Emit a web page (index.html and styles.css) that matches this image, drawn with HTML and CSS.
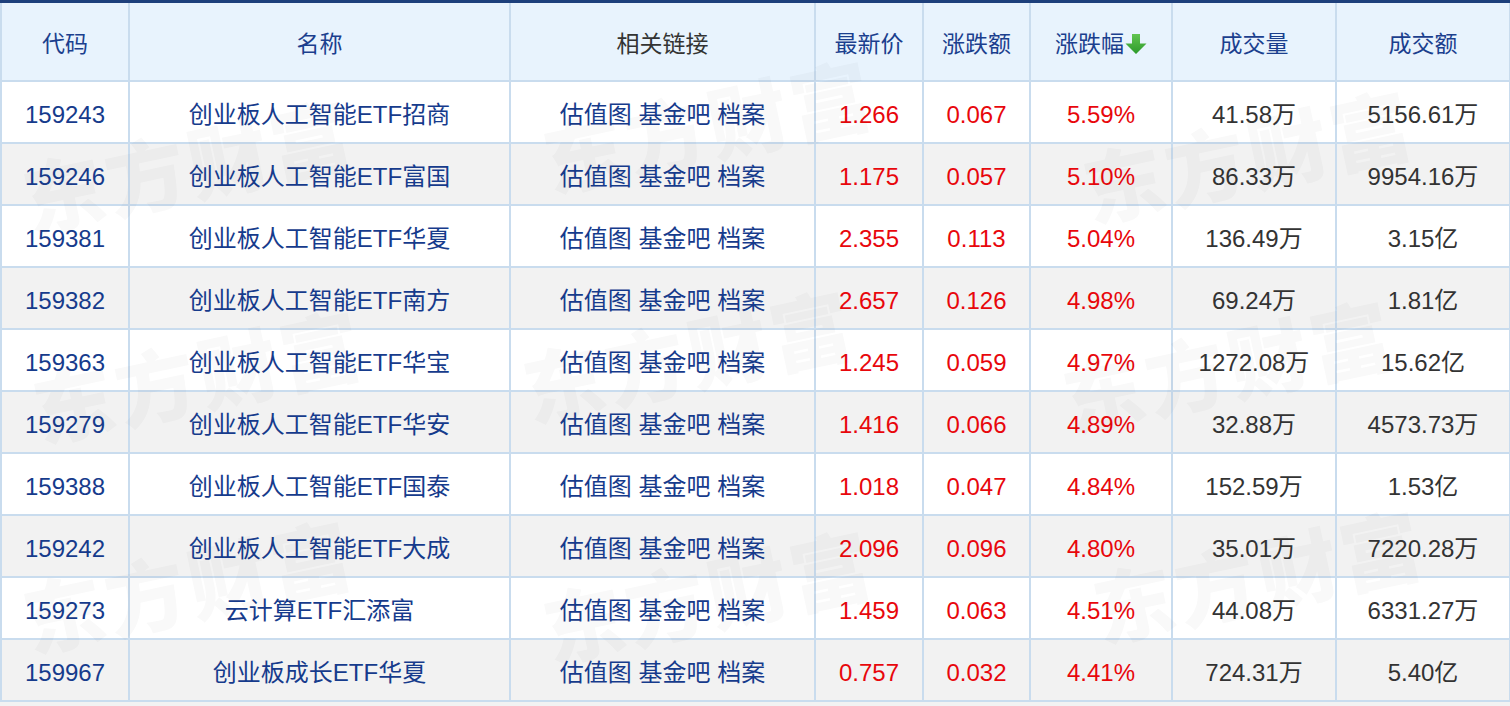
FILE: index.html
```html
<!DOCTYPE html>
<html lang="zh-CN">
<head>
<meta charset="utf-8">
<title>ETF</title>
<link rel="stylesheet" href="styles.css">
</head>
<body>
<div class="wrap">
<table class="grid">
  <colgroup>
    <col class="c1"><col class="c2"><col class="c3"><col class="c4"><col class="c5"><col class="c6"><col class="c7"><col class="c8">
  </colgroup>
  <thead>
    <tr>
      <th>代码</th><th>名称</th><th class="dark">相关链接</th><th>最新价</th><th>涨跌额</th>
      <th>涨跌幅<svg class="arrow" width="22" height="22" viewBox="0 0 22 22"><defs><linearGradient id="g" x1="0" y1="0" x2="0" y2="1"><stop offset="0" stop-color="#62c450"/><stop offset="1" stop-color="#2c9a2a"/></linearGradient></defs><path d="M7 1h8v9.5h6.5L11 21 0.5 10.5H7z" fill="url(#g)"/></svg></th>
      <th>成交量</th><th>成交额</th>
    </tr>
  </thead>
  <tbody>
    <tr><td class="code">159243</td><td class="name">创业板人工智能ETF招商</td><td class="links">估值图 基金吧 档案</td><td class="up">1.266</td><td class="up">0.067</td><td class="up">5.59%</td><td class="num">41.58万</td><td class="num">5156.61万</td></tr>
    <tr><td class="code">159246</td><td class="name">创业板人工智能ETF富国</td><td class="links">估值图 基金吧 档案</td><td class="up">1.175</td><td class="up">0.057</td><td class="up">5.10%</td><td class="num">86.33万</td><td class="num">9954.16万</td></tr>
    <tr><td class="code">159381</td><td class="name">创业板人工智能ETF华夏</td><td class="links">估值图 基金吧 档案</td><td class="up">2.355</td><td class="up">0.113</td><td class="up">5.04%</td><td class="num">136.49万</td><td class="num">3.15亿</td></tr>
    <tr><td class="code">159382</td><td class="name">创业板人工智能ETF南方</td><td class="links">估值图 基金吧 档案</td><td class="up">2.657</td><td class="up">0.126</td><td class="up">4.98%</td><td class="num">69.24万</td><td class="num">1.81亿</td></tr>
    <tr><td class="code">159363</td><td class="name">创业板人工智能ETF华宝</td><td class="links">估值图 基金吧 档案</td><td class="up">1.245</td><td class="up">0.059</td><td class="up">4.97%</td><td class="num">1272.08万</td><td class="num">15.62亿</td></tr>
    <tr><td class="code">159279</td><td class="name">创业板人工智能ETF华安</td><td class="links">估值图 基金吧 档案</td><td class="up">1.416</td><td class="up">0.066</td><td class="up">4.89%</td><td class="num">32.88万</td><td class="num">4573.73万</td></tr>
    <tr><td class="code">159388</td><td class="name">创业板人工智能ETF国泰</td><td class="links">估值图 基金吧 档案</td><td class="up">1.018</td><td class="up">0.047</td><td class="up">4.84%</td><td class="num">152.59万</td><td class="num">1.53亿</td></tr>
    <tr><td class="code">159242</td><td class="name">创业板人工智能ETF大成</td><td class="links">估值图 基金吧 档案</td><td class="up">2.096</td><td class="up">0.096</td><td class="up">4.80%</td><td class="num">35.01万</td><td class="num">7220.28万</td></tr>
    <tr><td class="code">159273</td><td class="name">云计算ETF汇添富</td><td class="links">估值图 基金吧 档案</td><td class="up">1.459</td><td class="up">0.063</td><td class="up">4.51%</td><td class="num">44.08万</td><td class="num">6331.27万</td></tr>
    <tr><td class="code">159967</td><td class="name">创业板成长ETF华夏</td><td class="links">估值图 基金吧 档案</td><td class="up">0.757</td><td class="up">0.032</td><td class="up">4.41%</td><td class="num">724.31万</td><td class="num">5.40亿</td></tr>
  </tbody>
</table>
<div class="watermark" aria-hidden="true">
  <span class="wm w1">东方财富</span>
  <span class="wm w2">东方财富</span>
  <span class="wm w3">东方财富</span>
  <span class="wm w4">东方财富</span>
  <span class="wm w5">东方财富</span>
  <span class="wm w6">东方财富</span>
  <span class="wm w7">东方财富</span>
  <span class="wm w8">东方财富</span>
  <span class="wm w9">东方财富</span>
</div>
</div>
</body>
</html>
```

FILE: styles.css
```css
html, body {
  margin: 0;
  padding: 0;
  background: #f2f2f2;
}
body {
  width: 1510px;
  height: 706px;
  overflow: hidden;
  font-family: "Liberation Sans", "Noto Sans CJK SC", sans-serif;
}
.wrap {
  position: relative;
  width: 1510px;
  overflow: hidden;
  border-top: 3px solid #1d3f7b;
}
.grid {
  width: 1509px;
  border-collapse: collapse;
  table-layout: fixed;
  font-size: 24px;
  line-height: 30px;
}
.c1 { width: 128px; }
.c2 { width: 381px; }
.c3 { width: 305px; }
.c4 { width: 108px; }
.c5 { width: 107px; }
.c6 { width: 142px; }
.c7 { width: 164px; }
.c8 { width: 174px; }
.grid th, .grid td {
  border: 2px solid #c9dcee;
  text-align: center;
  padding: 0;
  white-space: nowrap;
}
.grid thead th {
  border-top: 0;
  background: #e8f3fd;
  height: 77px;
  font-weight: normal;
  color: #1b3f8e;
  font-family: "Noto Sans CJK SC", sans-serif;
  font-size: 23px;
}
.grid thead th.dark {
  color: #333333;
}
.arrow {
  vertical-align: -3px;
  margin-left: 1px;
}
.grid tbody td {
  height: 55px;
  padding-top: 5px;
}
.grid tbody tr:nth-child(even) td {
  background: #f2f2f2;
}
.grid tbody tr:nth-child(odd) td {
  background: #ffffff;
}
.code, .name, .links {
  color: #163b8c;
}
.up {
  color: #e8070c;
}
.num {
  color: #333333;
}
.watermark {
  position: absolute;
  inset: 0;
  pointer-events: none;
  overflow: hidden;
}
.wm {
  position: absolute;
  font-family: "Noto Sans CJK SC", sans-serif;
  font-weight: 900;
  font-size: 80px;
  line-height: 100px;
  letter-spacing: 4px;
  color: rgba(40, 40, 40, 0.028);
  transform: rotate(-12deg);
  white-space: nowrap;
}
.w1 { left: 20px; top: 110px; }
.w2 { left: 540px; top: 70px; }
.w3 { left: 1080px; top: 100px; }
.w4 { left: 30px; top: 320px; }
.w5 { left: 520px; top: 300px; }
.w6 { left: 1060px; top: 310px; }
.w7 { left: 20px; top: 530px; }
.w8 { left: 540px; top: 540px; }
.w9 { left: 1090px; top: 520px; }
```
